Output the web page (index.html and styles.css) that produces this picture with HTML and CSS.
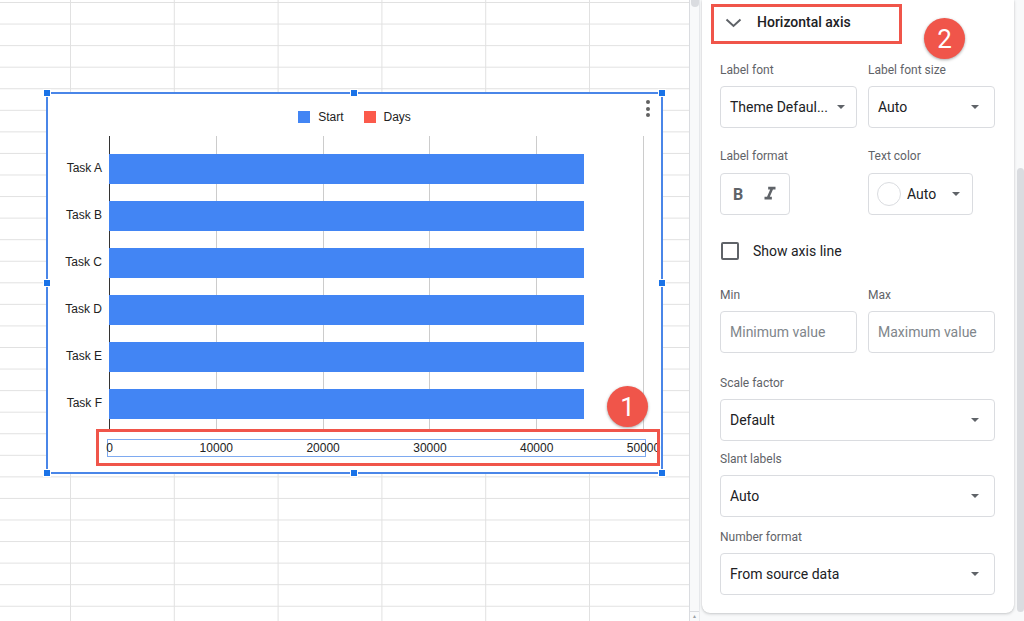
FILE: index.html
```html
<!DOCTYPE html>
<html>
<head>
<meta charset="utf-8">
<title>Chart editor - Horizontal axis</title>
<link rel="stylesheet" href="styles.css">
</head>
<body>
<div class="app">
  <div class="sheet">
    <div class="chart">
      <div class="legend">
        <span class="lg-item"><i class="sw sw-blue"></i>Start</span>
        <span class="lg-item"><i class="sw sw-red"></i>Days</span>
      </div>
      <div class="menu"><i></i><i></i><i></i></div>
      <div class="plot-wrap">
        <div class="ylabels">
          <div class="ylabel">Task A</div>
          <div class="ylabel">Task B</div>
          <div class="ylabel">Task C</div>
          <div class="ylabel">Task D</div>
          <div class="ylabel">Task E</div>
          <div class="ylabel">Task F</div>
        </div>
        <div class="plot">
          <div class="bar-row"><div class="bar"></div></div>
          <div class="bar-row"><div class="bar"></div></div>
          <div class="bar-row"><div class="bar"></div></div>
          <div class="bar-row"><div class="bar"></div></div>
          <div class="bar-row"><div class="bar"></div></div>
          <div class="bar-row"><div class="bar"></div></div>
        </div>
      </div>
      <div class="xaxis">
        <div class="ticks">
          <span class="tick">0</span>
          <span class="tick">10000</span>
          <span class="tick">20000</span>
          <span class="tick">30000</span>
          <span class="tick">40000</span>
          <span class="tick">50000</span>
        </div>
      </div>
      <div class="hl hl-axis"></div>
      <div class="badge badge-1">1</div>
      <span class="handle h-tl"></span>
      <span class="handle h-tm"></span>
      <span class="handle h-tr"></span>
      <span class="handle h-ml"></span>
      <span class="handle h-mr"></span>
      <span class="handle h-bl"></span>
      <span class="handle h-bm"></span>
      <span class="handle h-br"></span>
    </div>
  </div>
  <div class="vstrip">
    <div class="thumb"></div>
    <div class="strip-arrow">&#9650;</div>
  </div>
  <div class="panel-area">
    <div class="card">
      <div class="sec-head">
        <svg class="chev" width="17" height="10" viewBox="0 0 17 10"><polyline points="1.5,1.5 8.5,8 15.5,1.5" fill="none" stroke="#5f6368" stroke-width="2"/></svg>
        <span class="sec-title">Horizontal axis</span>
      </div>
      <div class="badge badge-2">2</div>

      <div class="row row-1">
        <div class="field w137">
          <div class="label">Label font</div>
          <div class="select pr11"><span class="val">Theme Defaul...</span><i class="caret"></i></div>
        </div>
        <div class="field w127">
          <div class="label">Label font size</div>
          <div class="select"><span class="val">Auto</span><i class="caret"></i></div>
        </div>
      </div>

      <div class="row row-2">
        <div class="field w137">
          <div class="label">Label format</div>
          <div class="fmt">
            <span class="fmt-b">B</span>
            <svg class="fmt-i" width="22" height="22" viewBox="0 0 24 24"><path d="M10 4v3h2.21l-3.42 8H6v3h8v-3h-2.21l3.42-8H18V4z" fill="#5f6368"/></svg>
          </div>
        </div>
        <div class="field w127">
          <div class="label">Text color</div>
          <div class="color-btn"><span class="swatch"></span><span class="val">Auto</span><i class="caret"></i></div>
        </div>
      </div>

      <label class="check-row">
        <span class="checkbox"></span>
        <span class="check-text">Show axis line</span>
      </label>

      <div class="row row-min">
        <div class="field w137">
          <div class="label">Min</div>
          <div class="input"><span class="ph">Minimum value</span></div>
        </div>
        <div class="field w127">
          <div class="label">Max</div>
          <div class="input"><span class="ph">Maximum value</span></div>
        </div>
      </div>

      <div class="field full row-scale">
        <div class="label">Scale factor</div>
        <div class="select"><span class="val">Default</span><i class="caret"></i></div>
      </div>

      <div class="field full row-slant">
        <div class="label">Slant labels</div>
        <div class="select"><span class="val">Auto</span><i class="caret"></i></div>
      </div>

      <div class="field full row-num">
        <div class="label">Number format</div>
        <div class="select"><span class="val">From source data</span><i class="caret"></i></div>
      </div>
    </div>
    <div class="pscroll"></div>
  </div>
</div>
</body>
</html>
```

FILE: styles.css
```css
* { box-sizing: border-box; }
html, body { margin: 0; padding: 0; }
body {
  width: 1024px;
  height: 621px;
  overflow: hidden;
  background: #fff;
  font-family: Roboto, "Noto Sans", Arial, sans-serif;
}
.app {
  display: flex;
  width: 1024px;
  height: 621px;
}

/* ---------- spreadsheet ---------- */
.sheet {
  position: relative;
  width: 689px;
  height: 621px;
  flex: none;
  background-color: #fff;
  background-image:
    linear-gradient(to right, #e1e1e1 1px, transparent 1px),
    linear-gradient(to bottom, #e1e1e1 1px, transparent 1px);
  background-size: 103.8px 100%, 100% 21.57px;
  background-position: 70px 0, 0 2px;
}

.chart {
  position: absolute;
  left: 46px;
  top: 92px;
  width: 617px;
  height: 382px;
  border: 2px solid #4a86e8;
  background: #fff;
  font-family: "Liberation Sans", Arial, sans-serif;
  font-size: 12px;
  color: #222;
}

.legend {
  display: flex;
  justify-content: center;
  gap: 20px;
  padding-top: 16px;
  height: 30px;
  line-height: 14px;
}
.lg-item { display: flex; align-items: center; }
.sw { display: block; width: 12px; height: 12px; margin-right: 8px; }
.sw-blue { background: #4285f4; }
.sw-red { background: #fb5a4b; }

.menu {
  position: absolute;
  left: 598px;
  top: 6px;
  display: flex;
  flex-direction: column;
  gap: 2.5px;
}
.menu i { display: block; width: 4px; height: 4px; border-radius: 50%; background: #616161; }

.plot-wrap {
  display: flex;
  margin-top: 12px;
  height: 294px;
}
.ylabels {
  width: 61px;
  padding-top: 9px;
  padding-right: 7px;
  text-align: right;
}
.ylabel { height: 47px; line-height: 47px; }

.plot {
  position: relative;
  width: 535px;
  padding-top: 9px;
  background-image: repeating-linear-gradient(to right, #cccccc 0 1px, transparent 1px 106.8px);
}
.plot::before {
  content: "";
  position: absolute;
  left: 0; top: 0; bottom: 0;
  width: 1px;
  background: #333;
}
.bar-row {
  position: relative;
  height: 47px;
  display: flex;
  align-items: center;
}
.bar { width: 475px; height: 30px; background: #4285f4; }

.xaxis {
  margin-top: 9px;
  margin-left: 59px;
  width: 539px;
  height: 18px;
  border: 1px solid #7eaaf0;
}
.ticks {
  display: flex;
  margin-left: -51.9px;
  line-height: 16px;
  white-space: nowrap;
}
.tick { flex: none; width: 106.8px; text-align: center; }

.hl {
  position: absolute;
  border: 3px solid #f0554a;
}
.hl-axis { left: 48px; top: 335px; width: 564px; height: 37px; }

.badge {
  position: absolute;
  width: 41px;
  height: 41px;
  border-radius: 50%;
  background: #f0554a;
  color: #fff;
  display: flex;
  align-items: center;
  justify-content: center;
  font-family: Roboto, Arial, sans-serif;
  font-size: 26px;
  box-shadow: 0 1px 3px rgba(0,0,0,0.35);
}
.badge-1 { left: 559px; top: 292px; }

.handle {
  position: absolute;
  width: 8px;
  height: 8px;
  background: #1a73e8;
  border: 1px solid #fff;
}
.h-tl { left: -5px; top: -5px; }
.h-tm { left: 302px; top: -5px; }
.h-tr { left: 610px; top: -5px; }
.h-ml { left: -5px; top: 185px; }
.h-mr { left: 610px; top: 185px; }
.h-bl { left: -5px; top: 375px; }
.h-bm { left: 302px; top: 375px; }
.h-br { left: 610px; top: 375px; }

/* ---------- strip ---------- */
.vstrip {
  width: 11px;
  flex: none;
  height: 621px;
  background: #f8f9fa;
  border-left: 1px solid #dadce0;
  border-right: 1px solid #e8eaed;
  display: flex;
  flex-direction: column;
  justify-content: space-between;
}
.thumb {
  width: 8px;
  height: 7px;
  margin-left: 1px;
  background: #dadce0;
  border-radius: 0 0 4px 4px;
}
.strip-arrow {
  height: 10px;
  border-top: 1px solid #dadce0;
  font-size: 5px;
  line-height: 9px;
  color: #9aa0a6;
  text-align: center;
}

/* ---------- panel ---------- */
.panel-area {
  flex: 1;
  height: 621px;
  background: #f8f9fa;
  display: flex;
  align-items: flex-start;
  padding-left: 2px;
}
.card {
  position: relative;
  width: 312px;
  height: 613px;
  flex: none;
  padding: 0 19px 0 18px;
  background: #fff;
  border-radius: 0 0 8px 8px;
  box-shadow: 0 1px 3px rgba(60,64,67,0.25), 0 0 1px rgba(60,64,67,0.2);
  color: #202124;
}
.pscroll {
  margin-left: 3px;
  margin-top: 168px;
  width: 7px;
  height: 444px;
  background: #dadce0;
  border-radius: 4px;
}

.sec-head {
  display: flex;
  align-items: center;
  margin-top: 4px;
  margin-left: -9px;
  width: 191px;
  height: 40px;
  padding-left: 11px;
  padding-bottom: 4px;
  border: 3px solid #f0554a;
}
.chev { display: block; margin-right: 15px; margin-top: 1px; }
.sec-title { font-size: 14px; font-weight: 500; color: #202124; }

.badge-2 { left: 222px; top: 18px; }

.row { display: flex; gap: 11px; }
.w137 { width: 137px; }
.w127 { width: 127px; }
.full { width: 275px; }

.label {
  font-size: 12px;
  line-height: 16px;
  height: 16px;
  margin-bottom: 8px;
  color: #5f6368;
}

.row-1 { margin-top: 18px; }
.row-2 { margin-top: 20px; }
.row-2 .label { margin-bottom: 9px; }
.row-min { margin-top: 27px; }
.row-scale { margin-top: 22px; }
.row-slant { margin-top: 10px; }
.row-num { margin-top: 12px; }

.select, .input, .color-btn, .fmt {
  height: 42px;
  border: 1px solid #dadce0;
  border-radius: 4px;
  display: flex;
  align-items: center;
  font-size: 14px;
}
.select { padding: 0 15px 0 9px; }
.select.pr11 { padding-right: 11px; }
.val { flex: none; white-space: nowrap; color: #202124; }
.caret {
  display: block;
  margin-left: auto;
  width: 0;
  height: 0;
  border-left: 4px solid transparent;
  border-right: 4px solid transparent;
  border-top: 4px solid #5f6368;
}
.input { padding-left: 9px; }
.ph { color: #80868b; white-space: nowrap; }

.fmt { width: 70px; padding-left: 12px; }
.fmt-b { font-weight: 700; font-size: 16px; color: #5f6368; }
.fmt-i { display: block; margin-left: 16px; }

.color-btn { width: 105px; padding: 0 12px 0 8px; }
.swatch {
  width: 24px;
  height: 24px;
  border-radius: 50%;
  border: 1px solid #dadce0;
  margin-right: 6px;
}

.check-row {
  display: flex;
  align-items: center;
  margin-top: 27px;
  height: 18px;
}
.checkbox {
  width: 18px;
  height: 18px;
  margin-left: 1px;
  border: 2px solid #5f6368;
  border-radius: 2px;
}
.check-text { margin-left: 14px; font-size: 14px; color: #202124; }
```
